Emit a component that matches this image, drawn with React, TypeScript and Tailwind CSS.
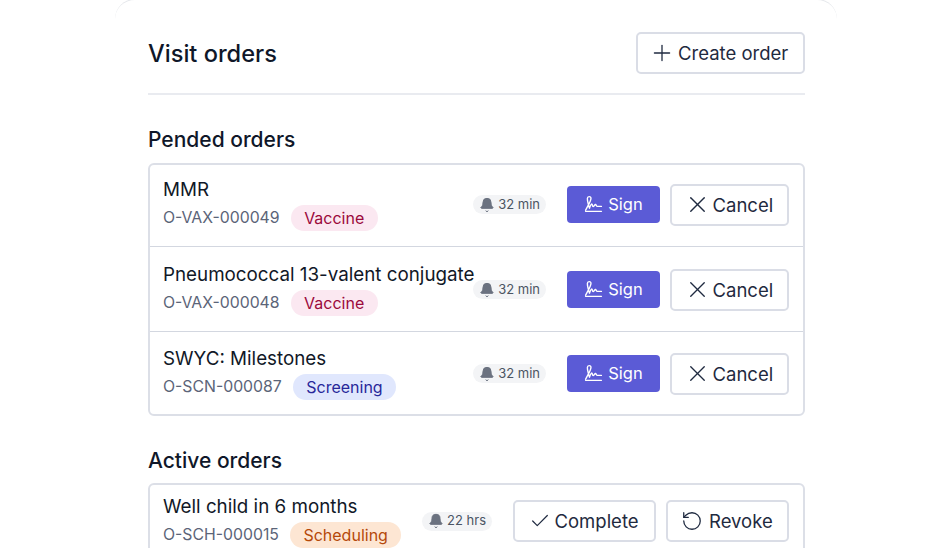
import { Bell, Check, Plus, RotateCcw, X } from 'lucide-react';
import type { ReactNode } from 'react';

type Tone = 'vaccine' | 'screening' | 'scheduling';

const toneClass: Record<Tone, string> = {
  vaccine: 'bg-[#fbe8f1] text-[#9b0a3c]',
  screening: 'bg-[#e0e7fd] text-[#28289a]',
  scheduling: 'bg-[#fde6d3] text-[#b5490a]',
};

const rowClass = [
  'h-[81px] pb-[2px]',
  'h-[85px] border-t border-[#d3d7e0] pt-px',
  'h-[83px] border-t border-[#d3d7e0] pt-px',
];

const pended: { name: string; code: string; tag: string; tone: Tone }[] = [
  { name: 'MMR', code: 'O-VAX-000049', tag: 'Vaccine', tone: 'vaccine' },
  { name: 'Pneumococcal 13-valent conjugate', code: 'O-VAX-000048', tag: 'Vaccine', tone: 'vaccine' },
  { name: 'SWYC: Milestones', code: 'O-SCN-000087', tag: 'Screening', tone: 'screening' },
];

function SignIcon() {
  return (
    <svg viewBox="0 0 18 18" fill="none" stroke="currentColor" strokeWidth="1.3" strokeLinecap="round" strokeLinejoin="round" className="h-[19px] w-[19px] shrink-0">
      <path d="M1.5 14.5C3 11 6.6 6 6.6 3.2C6.6 1 3.2 1 3.2 3.4C3.2 6 4.2 9.5 5.2 12.5C5.8 10.5 6.8 8.3 7.5 8.6C8.2 9 7.8 11 8.6 11C9.6 11 10 8.8 11 9C11.8 9.2 11.6 10.8 12.6 10.8H16.5" />
      <path d="M1.5 15.5H16.5" />
    </svg>
  );
}

function OutlineButton({ children, className }: { children: ReactNode; className: string }) {
  return (
    <button className={`flex h-[42px] shrink-0 items-center rounded-[5px] border-2 border-[#dadde6] bg-white pt-[2px] text-[18.5px] text-[#1f2a40] ${className}`}>
      {children}
    </button>
  );
}

function Timer({ label }: { label: string }) {
  return (
    <div className="flex h-[19px] shrink-0 items-center gap-[3px] rounded-full bg-[#f3f4f6] pl-[6px] pr-[6px] text-[13px] text-[#4b5563]">
      <Bell className="h-[16px] w-[16px] fill-[#6b7280] text-[#6b7280]" strokeWidth={1.5} />
      {label}
    </div>
  );
}

function OrderInfo({ name, code, tag, tone }: { name: string; code: string; tag: string; tone: Tone }) {
  return (
    <div className="min-w-0 flex-1">
      <div className="whitespace-nowrap text-[18.8px] leading-[24px] text-[#111827]">{name}</div>
      <div className="mt-[3px] flex items-center gap-[11px]">
        <span className="text-[15.8px] text-[#5b6478]">{code}</span>
        <span className={`flex h-[26px] items-center rounded-full px-[13.5px] text-[16px] ${toneClass[tone]}`}>{tag}</span>
      </div>
    </div>
  );
}

export default function App() {
  return (
    <div className="h-[548px] w-[952px] overflow-hidden bg-white font-['Inter',sans-serif]">
      <div className="-mt-px ml-[115px] mr-[115px] h-[600px] rounded-t-[20px] border-t border-[#e5e7eb] pl-[33px] pr-[32px] pt-[32px]">
        <div className="flex items-center justify-between border-b-2 border-[#e9ebf0] pb-[19px]">
          <h1 className="mt-[2px] text-[23.6px] font-[450] text-[#0f1729]">Visit orders</h1>
          <OutlineButton className="w-[169px] gap-[3px] pl-[11px]">
            <Plus className="-mt-[2px] h-[26px] w-[26px]" strokeWidth={1.2} />
            Create order
          </OutlineButton>
        </div>

        <h2 className="mt-[31px] text-[21px] font-[450] leading-[28px] text-[#0f1729]">Pended orders</h2>
        <div className="mt-[9px] rounded-[6px] border-2 border-[#dcdfe7]">
          {pended.map((order, i) => (
            <div key={order.code} className={`flex items-center pl-[13px] pr-[14px] ${rowClass[i]}`}>
              <OrderInfo {...order} />
              <div className="flex shrink-0 items-center">
                <Timer label="32 min" />
                <button className="ml-[21px] flex h-[37px] w-[93px] items-center justify-center gap-[5px] rounded-[4px] bg-[#5b5bd6] text-[16.5px] text-white">
                  <SignIcon />
                  Sign
                </button>
                <OutlineButton className="ml-[10px] w-[119px] gap-[2px] pl-[11.5px]">
                  <X className="-mt-[2px] h-[27px] w-[27px]" strokeWidth={1.2} />
                  Cancel
                </OutlineButton>
              </div>
            </div>
          ))}
        </div>

        <h2 className="mt-[30.5px] text-[21px] font-[450] leading-[28px] text-[#0f1729]">Active orders</h2>
        <div className="mt-[8px] rounded-[6px] border-2 border-[#dcdfe7]">
          <div className="flex h-[73px] items-center pl-[13px] pr-[14px]">
            <OrderInfo name="Well child in 6 months" code="O-SCH-000015" tag="Scheduling" tone="scheduling" />
            <div className="flex shrink-0 items-center">
              <Timer label="22 hrs" />
              <OutlineButton className="ml-[21px] w-[143px] gap-[4px] pl-[13.5px]">
                <Check className="-mt-[2px] h-[22px] w-[22px]" strokeWidth={1.3} />
                Complete
              </OutlineButton>
              <OutlineButton className="ml-[10px] w-[123px] gap-[6px] pl-[13px]">
                <RotateCcw className="-mt-[2px] h-[22px] w-[22px]" strokeWidth={1.4} />
                Revoke
              </OutlineButton>
            </div>
          </div>
        </div>
      </div>
    </div>
  );
}
